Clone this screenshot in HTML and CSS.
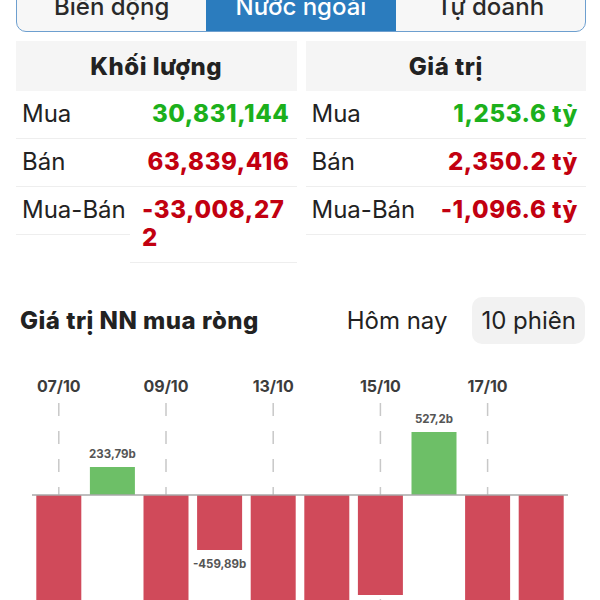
FILE: index.html
```html
<!DOCTYPE html>
<html lang="vi">
<head>
    <meta charset="UTF-8">
    <title>Nước ngoài</title>
    <link rel="stylesheet" href="styles.css">
</head>
<body>
    <div class="tabs">
        <div class="tab">Biến động</div>
        <div class="tab active">Nước ngoài</div>
        <div class="tab">Tự doanh</div>
    </div>

    <div class="summary">
        <div class="panel">
            <div class="panel-title">Khối lượng</div>
            <div class="row">
                <div class="cell label">Mua</div>
                <div class="cell value"><span class="up">30,831,144</span></div>
            </div>
            <div class="row">
                <div class="cell label">Bán</div>
                <div class="cell value"><span class="down">63,839,416</span></div>
            </div>
            <div class="row">
                <div class="cell label">Mua-Bán</div>
                <div class="cell value"><span class="down">-33,008,272</span></div>
            </div>
        </div>
        <div class="panel panel-right">
            <div class="panel-title">Giá trị</div>
            <div class="row">
                <div class="cell label">Mua</div>
                <div class="cell value"><span class="up">1,253.6 tỷ</span></div>
            </div>
            <div class="row">
                <div class="cell label">Bán</div>
                <div class="cell value"><span class="down">2,350.2 tỷ</span></div>
            </div>
            <div class="row">
                <div class="cell label">Mua-Bán</div>
                <div class="cell value"><span class="down">-1,096.6 tỷ</span></div>
            </div>
        </div>
    </div>

    <div class="chart-head">
        <div class="chart-title">Giá trị NN mua ròng</div>
        <div class="switch">
            <div class="switch-btn">Hôm nay</div>
            <div class="switch-btn selected">10 phiên</div>
        </div>
    </div>

    <svg class="chart" width="600" height="250" viewBox="0 0 600 250">
        <!-- nhãn ngày -->
        <g class="axis-label">
            <text x="58.8" y="31">07/10</text>
            <text x="166" y="31">09/10</text>
            <text x="273.2" y="31">13/10</text>
            <text x="380.4" y="31">15/10</text>
            <text x="487.6" y="31">17/10</text>
        </g>
        <g class="grid-line">
            <line x1="58.8" y1="42" x2="58.8" y2="250"/>
            <line x1="166" y1="42" x2="166" y2="250"/>
            <line x1="273.2" y1="42" x2="273.2" y2="250"/>
            <line x1="380.4" y1="42" x2="380.4" y2="250"/>
            <line x1="487.6" y1="42" x2="487.6" y2="250"/>
        </g>
        <!-- cột giá trị -->
        <rect class="bar-down" x="36.3" y="134" width="45" height="126"/>
        <rect class="bar-up" x="89.9" y="106" width="45" height="28"/>
        <rect class="bar-down" x="143.5" y="134" width="45" height="118"/>
        <rect class="bar-down" x="197.1" y="134" width="45" height="55"/>
        <rect class="bar-down" x="250.7" y="134" width="45" height="144"/>
        <rect class="bar-down" x="304.3" y="134" width="45" height="132"/>
        <rect class="bar-down" x="357.9" y="134" width="45" height="100"/>
        <rect class="bar-up" x="411.5" y="71" width="45" height="63"/>
        <rect class="bar-down" x="465.1" y="134" width="45" height="156"/>
        <rect class="bar-down" x="518.7" y="134" width="45" height="138"/>
        <line class="zero-line" x1="32" y1="134" x2="568" y2="134"/>
        <g class="bar-label">
            <text x="112.4" y="97">233,79b</text>
            <text x="219.6" y="207">-459,89b</text>
            <text x="434" y="62">527,2b</text>
        </g>
    </svg>
</body>
</html>
```

FILE: styles.css
```css
body {
    font-family: Inter, "Liberation Sans", Arial, sans-serif;
    margin: 0;
    padding: 0;
    background-color: #fff;
    color: #222;
    height: 100vh;
    overflow: hidden;
}
/* tab trên cùng */
.tabs {
    display: grid;
    grid-template-columns: repeat(3, 1fr);
    margin: -20px 14px 0 16px;
    height: 50px;
    border: 1.5px solid #6d9fcf;
    border-radius: 10px;
    overflow: hidden;
    background-color: #f7f7f7;
}
.tab {
    display: flex;
    align-items: center;
    justify-content: center;
    font-size: 24px;
    font-weight: 500;
    color: #2a2a2a;
}
.tab.active {
    background-color: #2b7cbe;
    color: #fff;
}
/* bảng khối lượng / giá trị */
.summary {
    display: flex;
    gap: 9px;
    margin: 9px 14px 0 16px;
}
.panel {
    flex: 1;
}
.panel-title {
    height: 50px;
    display: flex;
    align-items: center;
    justify-content: center;
    background-color: #f5f5f5;
    font-size: 24px;
    font-weight: 800;
    letter-spacing: 0.5px;
}
.row {
    display: grid;
    grid-template-columns: 114px 1fr;
    align-items: start;
}
.panel-right .row {
    grid-template-columns: 120px 1fr;
}
.cell {
    padding: 9px 0 10px;
    line-height: 28px;
    font-size: 24px;
    border-bottom: 1px solid #eeeeee;
}
.label {
    padding-left: 6px;
}
.value {
    display: flex;
    justify-content: flex-end;
    padding-left: 12px;
    padding-right: 7px;
    font-weight: 800;
    letter-spacing: 0.6px;
}
.value span {
    text-align: left;
    word-break: break-all;
}
.panel-right .value {
    padding-right: 8px;
}
.up {
    color: #1cb01c;
}
.down {
    color: #c20010;
}
/* biểu đồ */
.chart-head {
    display: flex;
    align-items: center;
    justify-content: space-between;
    margin: 34px 15px 0 20px;
}
.chart-title {
    font-size: 24px;
    font-weight: 800;
    letter-spacing: 0.5px;
}
.switch {
    display: flex;
    gap: 16px;
}
.switch-btn {
    padding: 0 9px;
    height: 47px;
    line-height: 47px;
    font-size: 24px;
    border-radius: 10px;
}
.switch-btn.selected {
    background-color: #f2f2f2;
}
.chart {
    display: block;
    margin-top: 17px;
}
.axis-label text {
    font-size: 16px;
    font-weight: 700;
    fill: #3c3c3c;
    text-anchor: middle;
}
.grid-line line {
    stroke: #c8c8c8;
    stroke-width: 1.5;
    stroke-dasharray: 13 15;
}
.zero-line {
    stroke: #a8a8a8;
    stroke-width: 1.5;
}
.bar-up {
    fill: #6dbf67;
}
.bar-down {
    fill: #d04a5a;
}
.bar-label text {
    font-size: 11.5px;
    font-weight: 700;
    fill: #555;
    text-anchor: middle;
}
```
